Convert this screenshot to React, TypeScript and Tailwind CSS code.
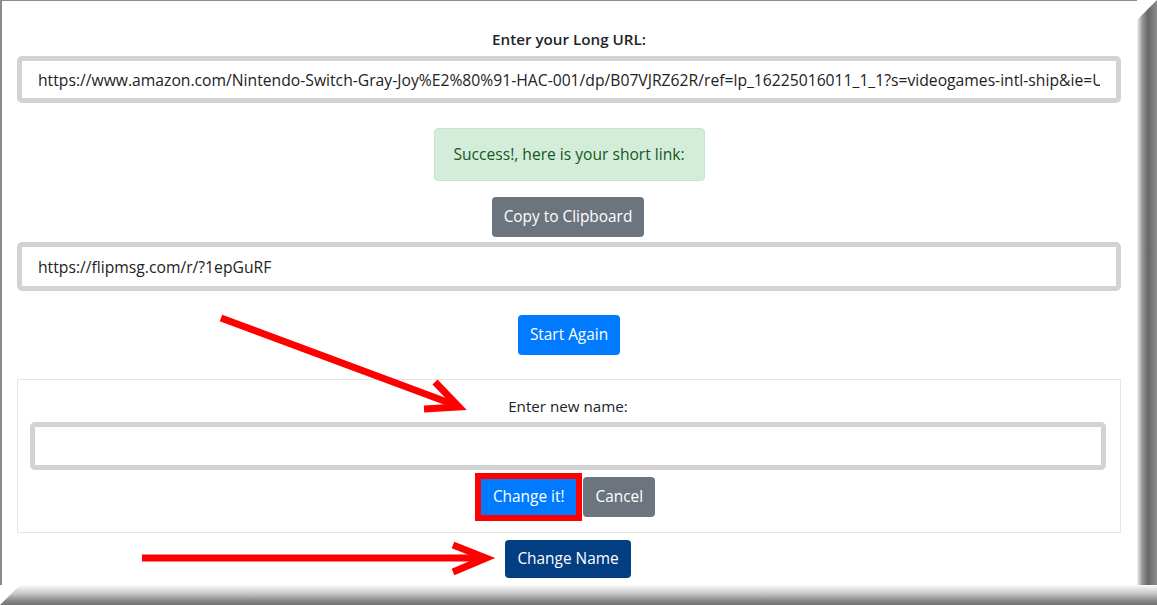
import React from 'react'

const LONG_URL =
  'https://www.amazon.com/Nintendo-Switch-Gray-Joy%E2%80%91-HAC-001/dp/B07VJRZ62R/ref=lp_16225016011_1_1?s=videogames-intl-ship&ie=UTF8'

function Field({ value }: { value: string }) {
  return (
    <input
      readOnly
      value={value}
      className="w-full h-full bg-white border-[5px] border-[#d3d3d3] rounded-[5px] pl-[16px] pr-[16px] text-[15.7px] text-[#222] outline-none"
    />
  )
}

export default function App() {
  return (
    <div
      className="relative w-[1157px] h-[605px] bg-white overflow-hidden flex flex-col"
      style={{ fontFamily: '"Open Sans", "Noto Sans", Arial, sans-serif' }}
    >
      <div className="flex flex-1 min-h-0">
        {/* page */}
        <div className="flex-1 border-l-[2px] border-t border-[#8c8c8c] pl-[15px] pr-[16px] pt-[27px] flex flex-col items-center text-[#212529]">
          <div className="text-[15.2px] font-semibold leading-[22px] mb-[6px]">Enter your Long URL:</div>
          <div className="w-full h-[47px]">
            <Field value={LONG_URL} />
          </div>

          <div className="mt-[25px] h-[53px] w-[271px] flex items-center justify-center bg-[#d4edda] border border-[#c3e6cb] rounded-[4px] text-[#155724] text-[15.6px]">
            Success!, here is your short link:
          </div>

          <button className="mt-[16px] h-[40px] px-[12px] mr-[2px] bg-[#6c757d] text-white text-[15.4px] rounded-[4px]">
            Copy to Clipboard
          </button>

          <div className="mt-[5px] w-full h-[49px]">
            <Field value="https://flipmsg.com/r/?1epGuRF" />
          </div>

          <button className="mt-[24px] h-[40px] px-[12px] bg-[#007bff] text-white text-[15.4px] rounded-[4px]">
            Start Again
          </button>

          <div className="mt-[24px] w-full border border-[#e4e4e4] pt-[15px] pb-[11px] pl-[12px] pr-[14px] flex flex-col items-center">
            <div className="text-[15.2px] font-medium leading-[22px] mb-[5px]">Enter new name:</div>
            <div className="w-full h-[48px]">
              <Field value="" />
            </div>
            <div className="mt-[3px] mr-[6px] flex items-center gap-[1px]">
              <div className="border-[6px] border-[#ff0000] h-[48px] flex">
                <button className="bg-[#007bff] text-white text-[15.4px] px-[12px] h-full">Change it!</button>
              </div>
              <button className="h-[40px] px-[12px] bg-[#6c757d] text-white text-[15.4px] rounded-[4px]">Cancel</button>
            </div>
          </div>

          <button className="mt-[7px] h-[38px] px-[12px] mr-[2px] bg-[#033e83] text-white text-[15.4px] rounded-[4px]">
            Change Name
          </button>
        </div>
        {/* right bevel */}
        <div className="w-[20px] bg-[linear-gradient(to_right,#f4f4f4,#9a9a9a_25%,#666_55%,#8c8c8c)] [clip-path:polygon(0_20px,100%_0,100%_100%,0_100%)]" />
      </div>
      {/* bottom bevel */}
      <div className="h-[20px] w-full bg-[linear-gradient(to_bottom,#fbfbfb,#c4c4c4_45%,#858585_80%,#737373)] [clip-path:polygon(20px_0,100%_0,100%_100%,0_100%)]" />

      {/* annotation arrows */}
      <svg className="absolute inset-0 pointer-events-none" width={1157} height={605} viewBox="0 0 1157 605">
        <g stroke="#ff0000" strokeWidth={7} fill="none" strokeLinejoin="miter">
          <line x1={221} y1={318} x2={455} y2={405} />
          <polyline points="435,382 459,407 424,409" />
          <line x1={142} y1={558} x2={484} y2={558} />
          <polyline points="453,545 486,558 453,572" />
        </g>
      </svg>
    </div>
  )
}
